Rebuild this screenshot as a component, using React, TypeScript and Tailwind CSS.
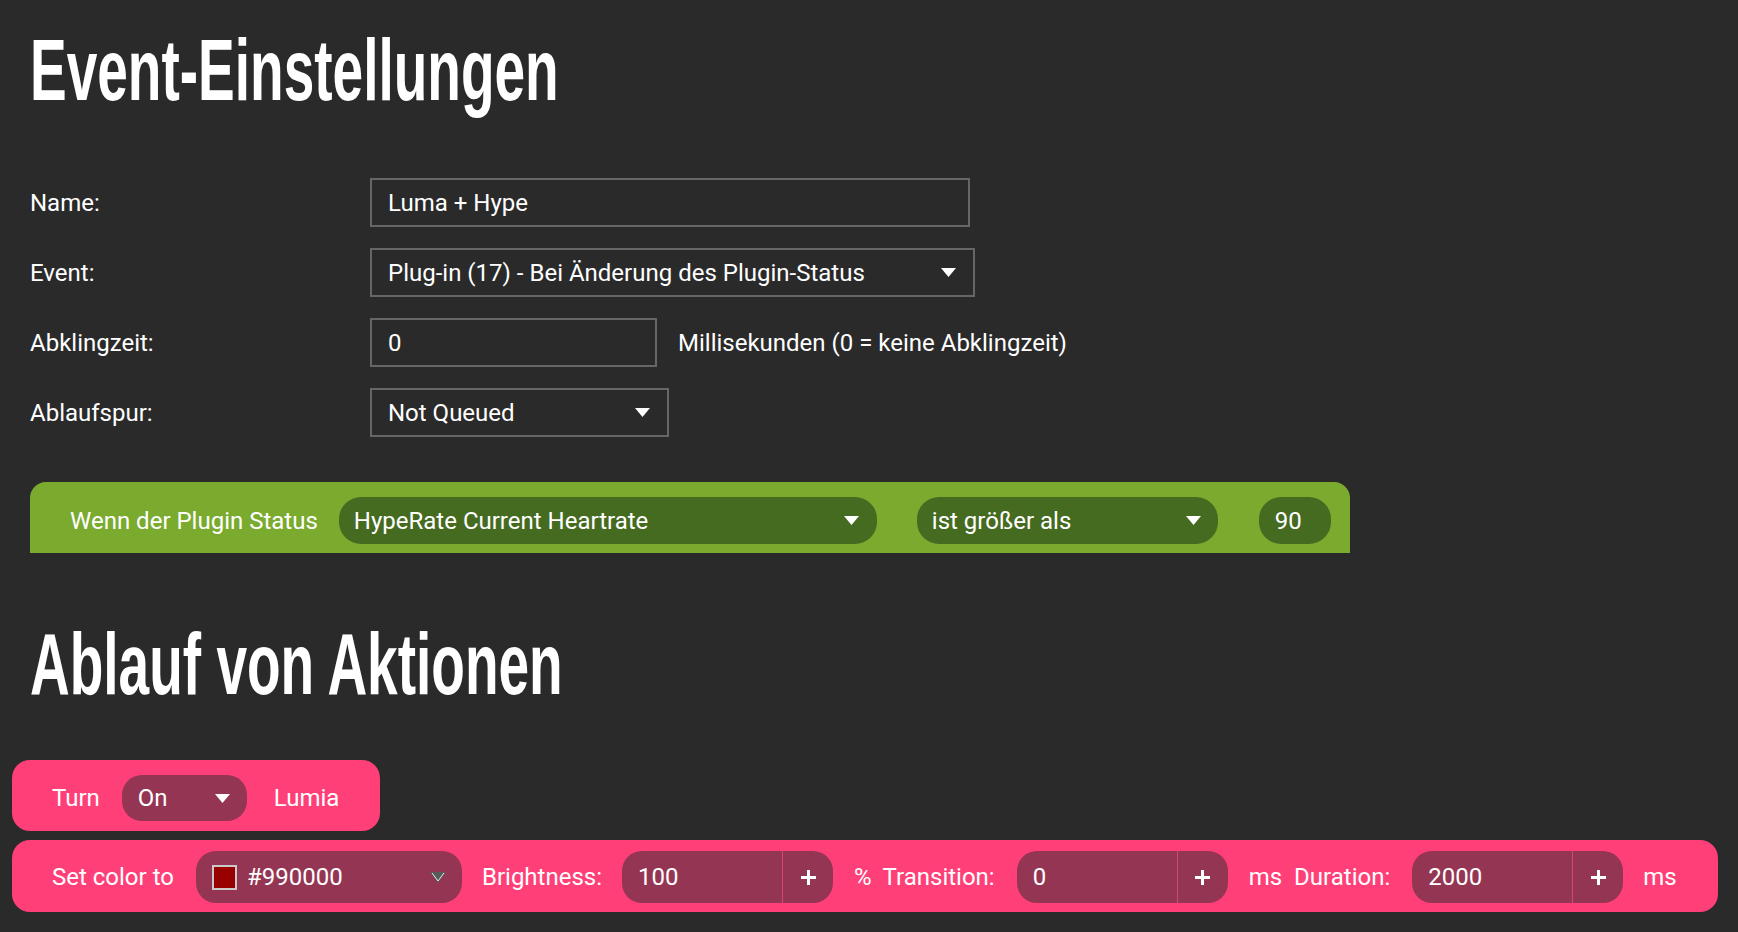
import React from "react";

const body = { fontFamily: "Roboto, 'Liberation Sans', sans-serif" };

function Caret({ className = "" }: { className?: string }) {
  return (
    <svg width="15" height="9" viewBox="0 0 15 9" className={className}>
      <path d="M0 0 H15 L7.5 9 Z" fill="#fff" />
    </svg>
  );
}

function Heading({ children }: { children: React.ReactNode }) {
  return (
    <h1
      className="h-[88px] text-[88px] leading-[88px] font-bold text-white origin-left scale-x-[0.625] whitespace-nowrap"
      style={{ fontFamily: "'Liberation Sans', Arial, sans-serif" }}
    >
      {children}
    </h1>
  );
}

function FormRow({ label, children }: { label: string; children: React.ReactNode }) {
  return (
    <div className="flex items-center h-[49px]">
      <div className="w-[340px] shrink-0 text-white text-[24px]">{label}</div>
      {children}
    </div>
  );
}

function BoxInput({ value, w }: { value: string; w: string }) {
  return (
    <div className={`${w} h-[49px] border-2 border-[#666666] flex items-center pl-4 text-white text-[24px]`}>
      {value}
    </div>
  );
}

function BoxSelect({ value, w }: { value: string; w: string }) {
  return (
    <div className={`${w} h-[49px] border-2 border-[#666666] flex items-center justify-between pl-4 pr-[17px] text-white text-[24px]`}>
      <span>{value}</span>
      <Caret />
    </div>
  );
}

function Plus() {
  return (
    <svg width="17" height="17" viewBox="0 0 17 17">
      <path d="M8.5 1 V16 M1 8.5 H16" stroke="#fff" strokeWidth="3" />
    </svg>
  );
}

function NumberGroup({ value }: { value: string }) {
  return (
    <div className="flex h-[52px] w-[211px] rounded-[20px] bg-[#943653] overflow-hidden text-white text-[24px]">
      <div className="w-[160px] flex items-center pl-4">{value}</div>
      <div className="flex-1 flex items-center justify-center border-l border-[#d8456f]">
        <Plus />
      </div>
    </div>
  );
}

export default function App() {
  return (
    <div className="min-h-screen w-full bg-[#2a2a2a] overflow-hidden" style={body}>
      <div className="pl-[30px] pt-[26px]">
        <Heading>Event-Einstellungen</Heading>

        <div className="mt-[64px] flex flex-col gap-[21px]">
          <FormRow label="Name:">
            <BoxInput value="Luma + Hype" w="w-[600px]" />
          </FormRow>
          <FormRow label="Event:">
            <BoxSelect value="Plug-in (17) - Bei Änderung des Plugin-Status" w="w-[605px]" />
          </FormRow>
          <FormRow label="Abklingzeit:">
            <BoxInput value="0" w="w-[287px]" />
            <span className="ml-[21px] text-white text-[24px]">Millisekunden (0 = keine Abklingzeit)</span>
          </FormRow>
          <FormRow label="Ablaufspur:">
            <BoxSelect value="Not Queued" w="w-[299px]" />
          </FormRow>
        </div>

        <div className="mt-[45px] w-[1320px] h-[71px] rounded-t-[16px] bg-[#7aab2e] flex items-center pl-[40px] pt-[6px] text-white text-[24px]">
          <span>Wenn der Plugin Status</span>
          <div className="ml-[21px] w-[538px] h-[47px] rounded-[22px] bg-[#456b21] flex items-center justify-between pl-[15px] pr-[18px]">
            <span>HypeRate Current Heartrate</span>
            <Caret />
          </div>
          <div className="ml-[40px] w-[301px] h-[47px] rounded-[22px] bg-[#456b21] flex items-center justify-between pl-[15px] pr-[17px]">
            <span>ist größer als</span>
            <Caret />
          </div>
          <div className="ml-[41px] w-[72px] h-[47px] rounded-[22px] bg-[#456b21] flex items-center pl-[16px]">
            90
          </div>
        </div>

        <div className="mt-[67px]">
          <Heading>Ablauf von Aktionen</Heading>
        </div>
      </div>

      <div className="pl-[12px] pr-[20px] mt-[52px] flex flex-col items-start gap-[9px] text-white text-[24px]">
        <div className="h-[71px] w-[368px] rounded-[18px] bg-[#ff3f78] flex items-center pl-[40px] pt-[5px]">
          <span>Turn</span>
          <div className="ml-[22px] w-[125px] h-[46px] rounded-[20px] bg-[#943653] flex items-center justify-between pl-4 pr-[17px]">
            <span>On</span>
            <Caret />
          </div>
          <span className="ml-[27px]">Lumia</span>
        </div>

        <div className="h-[72px] w-[1706px] rounded-[18px] bg-[#ff3f78] flex items-center pl-[40px] pt-[2px]">
          <span>Set color to</span>
          <div className="ml-[22px] w-[266px] h-[52px] rounded-[20px] bg-[#943653] flex items-center pl-4 pr-[16px]">
            <span className="w-[25px] h-[25px] border-2 border-[#c9c9c9] bg-[#990000] shrink-0" />
            <span className="ml-[10px] flex-1">#990000</span>
            <svg width="16" height="11" viewBox="0 0 16 11">
              <path d="M0 0 H16 L8 11 Z" fill="#5a5a5a" />
              <path d="M2 1 L8 9 L14 1" fill="none" stroke="#e8e8e8" strokeWidth="1" />
            </svg>
          </div>
          <span className="ml-[20px]">Brightness:</span>
          <div className="ml-[20px]">
            <NumberGroup value="100" />
          </div>
          <span className="ml-[21px]">%</span>
          <span className="ml-[11px]">Transition:</span>
          <div className="ml-[22px]">
            <NumberGroup value="0" />
          </div>
          <span className="ml-[21px]">ms</span>
          <span className="ml-[12px]">Duration:</span>
          <div className="ml-[22px]">
            <NumberGroup value="2000" />
          </div>
          <span className="ml-[20px]">ms</span>
        </div>
      </div>
    </div>
  );
}
